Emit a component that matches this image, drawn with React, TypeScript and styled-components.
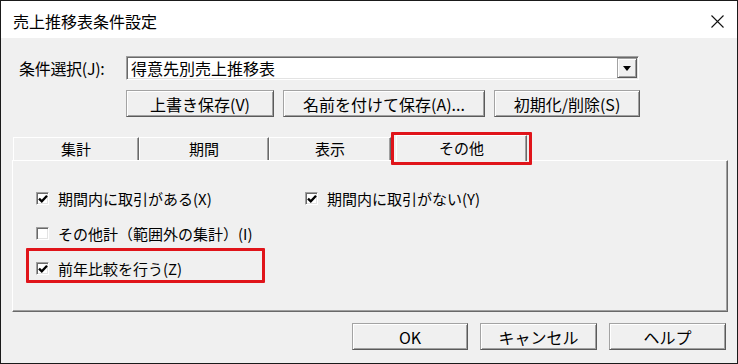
import React from 'react';
import styled, { createGlobalStyle, css } from 'styled-components';

// ─── Global ───────────────────────────────────────────────────────────────────

const GlobalStyle = createGlobalStyle`
  html, body {
    margin: 0;
    padding: 0;
    background: #f0f0f0;
  }
  body {
    font-family: "Noto Sans CJK JP", "Noto Sans", sans-serif;
    color: #000;
  }
  * { box-sizing: border-box; }
`;

// ─── Shared bevels ────────────────────────────────────────────────────────────

const raised = css`
  border-style: solid;
  border-width: 1px;
  border-color: #a3a3a3 #5a5a5a #5a5a5a #a3a3a3;
  box-shadow: inset 1px 1px 0 #fff, inset -1px -1px 0 #a0a0a0;
  background: #f0f0f0;
`;

const sunken = css`
  border-style: solid;
  border-width: 1px;
  border-color: #a0a0a0 #fff #fff #a0a0a0;
  box-shadow: inset 1px 1px 0 #696969, inset -1px -1px 0 #e3e3e3;
`;

// ─── Window ───────────────────────────────────────────────────────────────────

const Window = styled.div`
  width: 738px;
  height: 364px;
  border: 1px solid #1a1a1a;
  display: flex;
  flex-direction: column;
  overflow: hidden;
`;

const TitleBar = styled.div`
  height: 37px;
  flex-shrink: 0;
  background: #fff;
  display: flex;
  align-items: center;
  justify-content: space-between;
  padding: 0 13px 0 12px;
`;

const Title = styled.span`
  font-size: 16px;
  line-height: 20px;
  margin-top: 2px;
`;

const CloseButton = styled.div`
  width: 13px;
  height: 13px;
  display: flex;
  margin-top: 3px;
`;

const Body = styled.div`
  flex: 1;
  background: #f0f0f0;
  display: flex;
  flex-direction: column;
  padding: 18px 9px 0 11px;
`;

// ─── Condition row ────────────────────────────────────────────────────────────

const ConditionRow = styled.div`
  display: flex;
  align-items: center;
  height: 24px;
`;

const Label = styled.label`
  width: 107px;
  margin-left: 7px;
  font-size: 16px;
  line-height: 20px;
  letter-spacing: -0.3px;
`;

const Combo = styled.div`
  ${sunken};
  width: 513px;
  height: 24px;
  background: #fff;
  display: flex;
  align-items: center;
  justify-content: space-between;
  padding: 0 1px 0 4px;
`;

const ComboText = styled.span`
  font-size: 16px;
  line-height: 20px;
`;

const DropButton = styled.div`
  ${raised};
  width: 20px;
  height: 20px;
  display: flex;
  align-items: center;
  justify-content: center;
`;

const ButtonRow = styled.div`
  display: flex;
  gap: 9px;
  margin: 10px 0 0 114px;
`;

const PushButton = styled.div<{ w: number }>`
  ${raised};
  width: ${({ w }) => w}px;
  height: 27px;
  display: flex;
  align-items: center;
  justify-content: center;
  font-size: 16px;
  line-height: 20px;
  white-space: nowrap;
`;

// ─── Tabs ─────────────────────────────────────────────────────────────────────

const TabStrip = styled.div`
  display: flex;
  align-items: flex-end;
  height: 25px;
  margin: 18px 0 0 1px;
  position: relative;
  z-index: 1;
`;

const Tab = styled.div<{ w: number; active?: boolean; gapBefore?: number }>`
  position: relative;
  width: ${({ w }) => w}px;
  height: ${({ active }) => (active ? 26 : 23)}px;
  margin-left: ${({ gapBefore }) => gapBefore ?? 0}px;
  margin-bottom: ${({ active }) => (active ? -1 : 0)}px;
  background: #f0f0f0;
  border-top: 1px solid #fff;
  border-left: 1px solid #fff;
  border-right: 1px solid #696969;
  box-shadow: inset -1px 0 0 #a0a0a0;
  display: flex;
  align-items: center;
  justify-content: center;
  padding-bottom: 1px;
  font-size: 15px;
  line-height: 20px;
`;

const Highlight = styled.div<{ l: number; t: number; w: number; h: number }>`
  position: absolute;
  left: ${({ l }) => l}px;
  top: ${({ t }) => t}px;
  width: ${({ w }) => w}px;
  height: ${({ h }) => h}px;
  border: 3px solid #e0141a;
  border-radius: 1px;
  pointer-events: none;
`;

const Panel = styled.div`
  height: 152px;
  border-top: 1px solid #fff;
  border-left: 1px solid #fff;
  border-right: 1px solid #696969;
  border-bottom: 1px solid #696969;
  box-shadow: inset -1px -1px 0 #a0a0a0;
  padding: 20px 0 0 23px;
  display: grid;
  grid-template-columns: 269px auto;
  grid-auto-rows: 35px;
  align-content: start;
`;

// ─── Checkboxes ───────────────────────────────────────────────────────────────

const CheckItem = styled.div`
  position: relative;
  display: flex;
  align-items: center;
  gap: 9px;
`;

const Box = styled.span`
  ${sunken};
  width: 13px;
  height: 13px;
  flex-shrink: 0;
  background: #fff;
  display: flex;
  align-items: center;
  justify-content: center;
`;

const CheckLabel = styled.span`
  font-size: 15px;
  line-height: 20px;
  white-space: nowrap;
`;

// ─── Footer ───────────────────────────────────────────────────────────────────

const Footer = styled.div`
  display: flex;
  justify-content: flex-end;
  gap: 12px;
  margin: 11px 2px 0 0;
`;

// ─── Parts ────────────────────────────────────────────────────────────────────

const CheckMark = () => (
  <svg width="10" height="10" viewBox="0 0 10 10">
    <path d="M1 4.6 L3.8 7.4 L9 1.8" fill="none" stroke="#000" strokeWidth="2.3" />
  </svg>
);

interface CheckProps {
  label: string;
  checked?: boolean;
  children?: React.ReactNode;
}

const Check: React.FC<CheckProps> = ({ label, checked, children }) => (
  <CheckItem>
    <Box>{checked && <CheckMark />}</Box>
    <CheckLabel>{label}</CheckLabel>
    {children}
  </CheckItem>
);

const TABS = [
  { label: '集計', w: 126 },
  { label: '期間', w: 130 },
  { label: '表示', w: 122 },
];

const App: React.FC = () => (
  <>
    <GlobalStyle />
    <Window>
      <TitleBar>
        <Title>売上推移表条件設定</Title>
        <CloseButton>
          <svg width="13" height="13" viewBox="0 0 13 13">
            <path d="M0.5 0.5 L12.5 12.5 M12.5 0.5 L0.5 12.5" stroke="#111" strokeWidth="1.1" />
          </svg>
        </CloseButton>
      </TitleBar>

      <Body>
        <ConditionRow>
          <Label>条件選択(J):</Label>
          <Combo>
            <ComboText>得意先別売上推移表</ComboText>
            <DropButton>
              <svg width="8" height="5" viewBox="0 0 8 5">
                <path d="M0 0 H8 L4 5 Z" fill="#000" />
              </svg>
            </DropButton>
          </Combo>
        </ConditionRow>

        <ButtonRow>
          <PushButton w={148}>上書き保存(V)</PushButton>
          <PushButton w={202}>名前を付けて保存(A)...</PushButton>
          <PushButton w={146}>初期化/削除(S)</PushButton>
        </ButtonRow>

        <TabStrip>
          {TABS.map((t) => (
            <Tab key={t.label} w={t.w}>
              {t.label}
            </Tab>
          ))}
          <Tab w={131} active gapBefore={5}>
            その他
            <Highlight l={-6} t={-4} w={141} h={33} />
          </Tab>
        </TabStrip>

        <Panel>
          <Check label="期間内に取引がある(X)" checked />
          <Check label="期間内に取引がない(Y)" checked />
          <Check label="その他計（範囲外の集計）(I)" />
          <span />
          <Check label="前年比較を行う(Z)" checked>
            <Highlight l={-10} t={-3} w={239} h={35} />
          </Check>
        </Panel>

        <Footer>
          <PushButton w={116}>OK</PushButton>
          <PushButton w={117}>キャンセル</PushButton>
          <PushButton w={117}>ヘルプ</PushButton>
        </Footer>
      </Body>
    </Window>
  </>
);

export default App;
